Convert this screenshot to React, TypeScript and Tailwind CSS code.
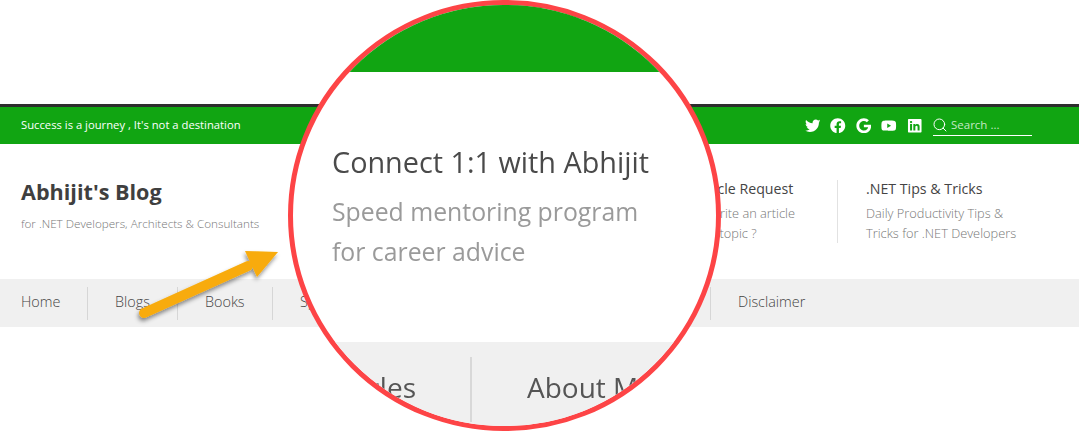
import { FaTwitter, FaFacebook, FaGoogle, FaYoutube, FaLinkedin } from 'react-icons/fa';
import { Search } from 'lucide-react';

const navItems = [
  { label: 'Home', width: 'w-[88px] pl-[21px]' },
  { label: 'Blogs', width: 'w-[90px] pl-[27px]' },
  { label: 'Books', width: 'w-[95px] pl-[27px]' },
  { label: 'Speaking', width: 'w-[130px] pl-[27px]' },
  { label: 'Articles', width: 'w-[130px] pl-[27px]' },
  { label: 'About Me', width: 'w-[178px] pl-[27px]' },
];

const Arrow = () => (
  <svg className="absolute left-[130px] top-[240px]" width="160" height="90" viewBox="0 0 160 90">
    <defs>
      <filter id="arrowShadow" x="-20%" y="-30%" width="140%" height="170%">
        <feDropShadow dx="-1" dy="3" stdDeviation="2" floodColor="#000" floodOpacity="0.45" />
      </filter>
    </defs>
    <g filter="url(#arrowShadow)">
      <path d="M14 73 L118 26" stroke="#f8ab0a" strokeWidth="10" strokeLinecap="round" fill="none" />
      <path d="M148 12 L115 11 L127 37 Z" fill="#f8ab0a" />
    </g>
  </svg>
);

const Magnifier = () => (
  <div className="absolute left-[288px] top-0 w-[433px] h-[431px] rounded-full border-[5px] border-[#fd4446] overflow-hidden bg-white flex flex-col">
    <div className="h-[67px] bg-[#11a512] shrink-0" />
    <div className="h-[270px] shrink-0 pl-[39px] pt-[71px]">
      <p className="text-[28.8px] leading-[38px] text-[#4a4a4a] blur-[0.3px]">Connect 1:1 with Abhijit</p>
      <p className="mt-[10px] text-[24.8px] leading-[40px] text-[#9a9a9a] blur-[0.3px]">
        Speed mentoring program
        <br />
        for career advice
      </p>
    </div>
    <div className="flex-1 bg-[#f0f0f0] flex pt-[15px]">
      <div className="w-[179px] h-[65px] border-r-2 border-[#d8d8d8] flex justify-end pr-[54px] pt-[11px] text-[28px] leading-[38px] text-[#555] blur-[0.3px]">
        Articles
      </div>
      <div className="pl-[55px] pt-[11px] text-[28px] leading-[38px] text-[#555] blur-[0.3px]">About Me</div>
    </div>
  </div>
);

export default function App() {
  return (
    <div className="relative w-[1079px] h-[431px] overflow-hidden bg-white font-['Open_Sans',sans-serif]">
      <div className="h-[104px]" />
      <div className="h-[40px] border-t-[3px] border-[#2d2d2d] bg-[#11a512] flex items-center pl-[21px] pr-[47px] text-white">
        <span className="text-[11.25px] flex-1">Success is a journey , It's not a destination</span>
        <div className="flex items-center gap-[10px] text-[15.5px]">
          <FaTwitter />
          <FaFacebook />
          <FaGoogle />
          <FaYoutube />
          <FaLinkedin />
        </div>
        <div className="ml-[11px] w-[99px] h-[20px] border-b border-white flex items-center gap-[3px]">
          <Search size={16} strokeWidth={1.5} className="-ml-[1px]" />
          <span className="text-[11.5px] text-[#c4e8c4]">Search ...</span>
        </div>
      </div>

      <div className="h-[135px] flex pl-[21px]">
        <div className="flex-1 pt-[31px]">
          <h1 className="text-[21.6px] leading-[34px] font-bold text-[#3f3f3f]">Abhijit's Blog</h1>
          <p className="mt-[5px] text-[11.7px] leading-[18px] font-light text-[#777]">for .NET Developers, Architects &amp; Consultants</p>
        </div>
        <div className="w-[144px] mt-[36px] h-[63px] pl-[1px]">
          <p className="text-[14.2px] leading-[18px] text-[#444] whitespace-nowrap">Article Request</p>
          <p className="mt-[5px] -ml-[3px] text-[12.8px] leading-[20px] font-light text-[#777] whitespace-nowrap">
            Pls write an article
            <br />
            on a topic ?
          </p>
        </div>
        <div className="w-[242px] mt-[36px] h-[63px] border-l border-[#e2e2e2] pl-[28px]">
          <p className="text-[14.2px] leading-[18px] text-[#444]">.NET Tips &amp; Tricks</p>
          <p className="mt-[5px] text-[12.8px] leading-[20px] font-light text-[#777]">
            Daily Productivity Tips &amp;
            <br />
            Tricks for .NET Developers
          </p>
        </div>
      </div>

      <div className="h-[48px] bg-[#f0f0f0] flex items-center text-[14.4px] font-light text-[#444]">
        {navItems.map((item) => (
          <div key={item.label} className={`${item.width} h-[33px] leading-[29px] border-r border-[#d6d6d6] shrink-0`}>
            {item.label}
          </div>
        ))}
        <div className="pl-[27px] leading-[29px] h-[33px]">Disclaimer</div>
      </div>

      {/* overlays from the annotated screenshot */}
      <Arrow />
      <Magnifier />
    </div>
  );
}
